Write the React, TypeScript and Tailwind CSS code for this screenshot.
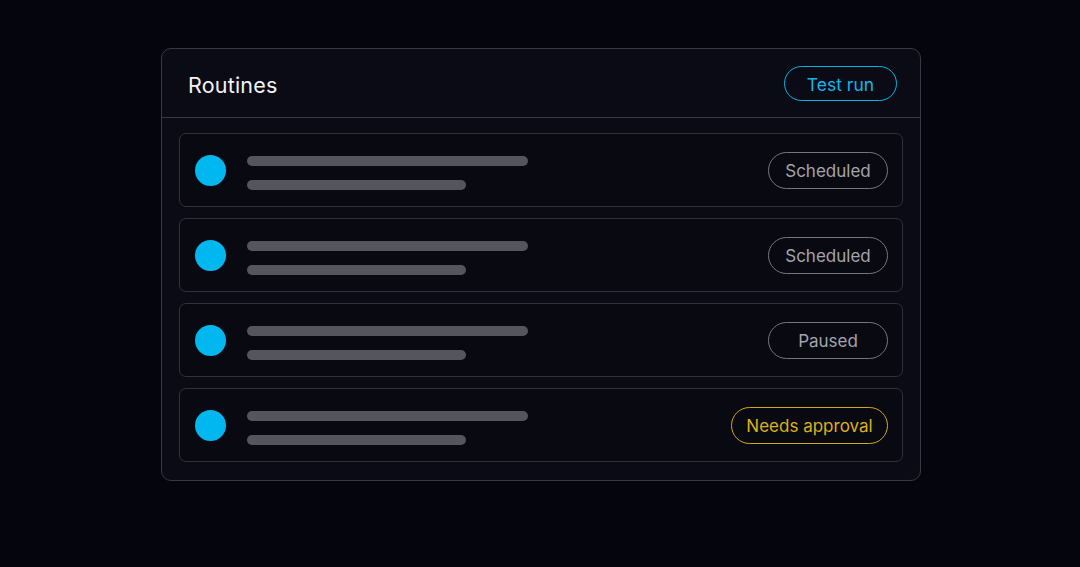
import React from "react";

type Row = { label: string; tone: "gray" | "yellow"; w: string };

const rows: Row[] = [
  { label: "Scheduled", tone: "gray", w: "w-[120px]" },
  { label: "Scheduled", tone: "gray", w: "w-[120px]" },
  { label: "Paused", tone: "gray", w: "w-[120px]" },
  { label: "Needs approval", tone: "yellow", w: "w-[157px]" },
];

export default function App() {
  return (
    <div
      className="w-[1080px] h-[567px] bg-[#05050d] flex pl-[161px] pt-[48px]"
      style={{ fontFamily: "Inter, 'Noto Sans', sans-serif" }}
    >
      <div className="w-[760px] h-[433px] rounded-[10px] border border-[#393943] bg-[#0b0b15] flex flex-col">
        <div className="h-[69px] shrink-0 flex items-center justify-between pl-[26px] pr-[23px] border-b border-[#393943]">
          <span className="text-[21.5px] leading-[26px] text-[#f2f2f4] tracking-[0.2px] mt-[4px]">Routines</span>
          <button className="h-[35px] w-[113px] rounded-full border-[1.5px] border-[#0ab3e6] text-[#12b6ea] text-[17.5px] leading-[20px] flex items-center justify-center pt-[2px] mt-[1px]">
            Test run
          </button>
        </div>
        <div className="flex flex-col gap-[11px] pt-[15px] px-[17px]">
          {rows.map((r, i) => (
            <div
              key={i}
              className="h-[74px] rounded-[7px] border border-[#31313b] bg-[#090912] flex items-center pl-[15px] pr-[14px]"
            >
              <div className="w-[31px] h-[31px] rounded-full bg-[#00b8ef] shrink-0" />
              <div className="ml-[21px] flex flex-col gap-[14px] mt-[5px]">
                <div className="w-[281px] h-[10px] rounded-full bg-[#55555e]" />
                <div className="w-[219px] h-[10px] rounded-full bg-[#55555e]" />
              </div>
              <div className="flex-1" />
              <div
                className={
                  r.tone === "yellow"
                    ? `${r.w} h-[37px] rounded-full border-[1.5px] border-[#d3a918] text-[#dcb11c] text-[17px] leading-[20px] pt-[1px] flex items-center justify-center`
                    : `${r.w} h-[37px] rounded-full border-[1.5px] border-[#75757d] text-[#a4a4ac] text-[17px] leading-[20px] pt-[1px] flex items-center justify-center`
                }
              >
                {r.label}
              </div>
            </div>
          ))}
        </div>
      </div>
    </div>
  );
}
